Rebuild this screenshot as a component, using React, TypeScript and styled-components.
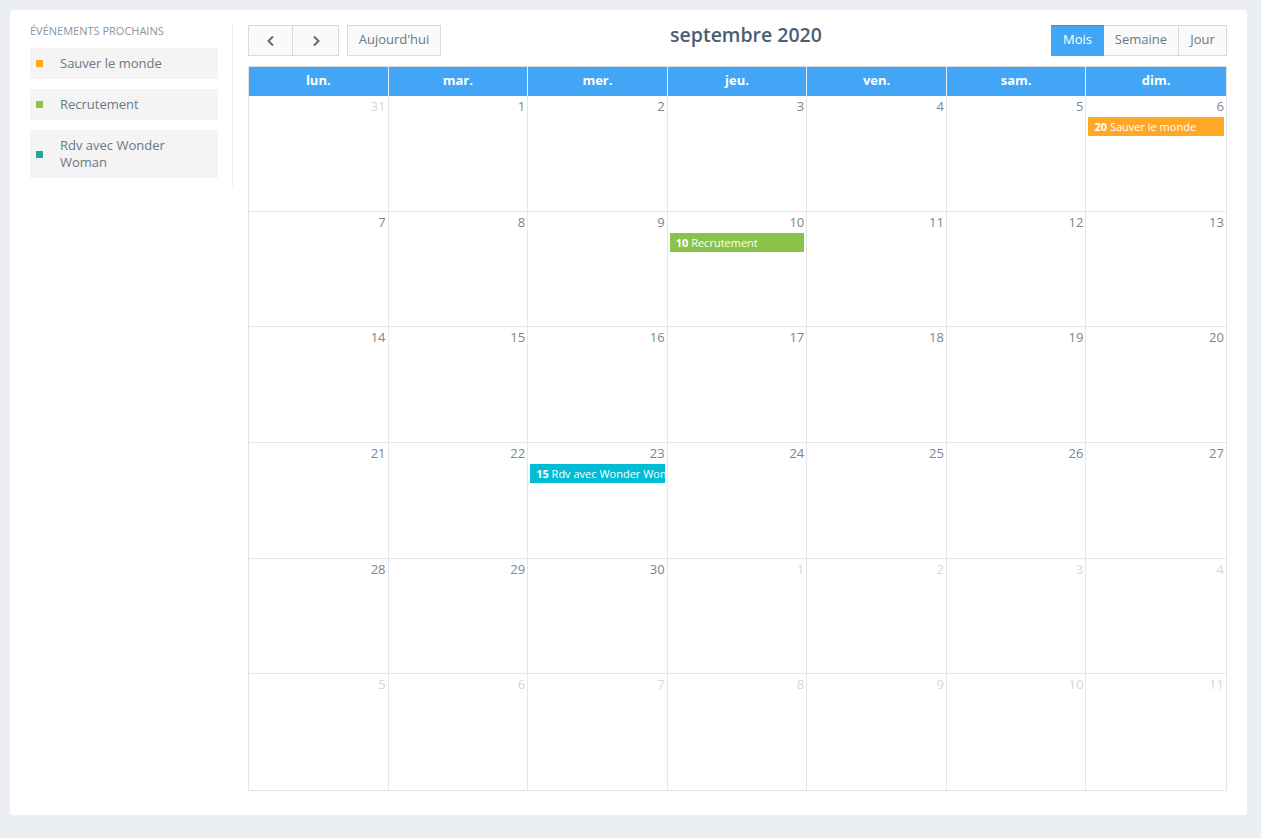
import React from "react";
import styled, { createGlobalStyle } from "styled-components";

const GlobalStyle = createGlobalStyle`
  html, body { margin: 0; padding: 0; background: #ebeef2; }
  body { font-family: "Open Sans", "Noto Sans", sans-serif; color: #6b7785; }
  * { box-sizing: border-box; }
`;

const Card = styled.div`
  margin: 10px;
  width: 1237px;
  height: 805px;
  background: #fff;
  border-radius: 3px;
  padding: 15px 20px 25px 20px;
  display: flex;
  align-items: flex-start;
  gap: 15px;
`;

const Sidebar = styled.aside`
  width: 203px;
  padding: 0 14px 8px 0;
  border-right: 1px solid #ececec;
  display: flex;
  flex-direction: column;
  gap: 10px;
`;

const SideTitle = styled.div`
  font-size: 11px;
  line-height: 11px;
  height: 13px;
  color: #8996a3;
  text-transform: uppercase;
`;

const SideItem = styled.div`
  display: flex;
  align-items: center;
  gap: 17px;
  background: #f4f4f4;
  padding: 7px 30px 7px 6px;
  font-size: 13px;
  line-height: 17px;
  color: #6b7785;
`;

const Swatch = styled.span<{ $c: string }>`
  flex: none;
  width: 7px;
  height: 7px;
  background: ${(p) => p.$c};
`;

const Main = styled.main`
  flex: 1;
  display: flex;
  flex-direction: column;
  gap: 10px;
`;

const Toolbar = styled.div`
  display: flex;
  align-items: center;
  justify-content: space-between;
  height: 31px;
`;

const Group = styled.div`
  display: flex;
  align-items: center;
  gap: 9px;
`;

const BtnGroup = styled.div`
  display: flex;
`;

const Btn = styled.button<{ $w: number; $active?: boolean }>`
  width: ${(p) => p.$w}px;
  height: 31px;
  margin-left: -1px;
  &:first-child { margin-left: 0; }
  display: flex;
  align-items: center;
  justify-content: center;
  font-family: inherit;
  font-size: 13px;
  line-height: 16px;
  padding: 0 0 3px 0;
  cursor: pointer;
  color: ${(p) => (p.$active ? "#fff" : "#6b7785")};
  background: ${(p) => (p.$active ? "#42a5f5" : "#fafafa")};
  border: 1px solid ${(p) => (p.$active ? "#42a5f5" : "#d5dbe1")};
  border-top-color: ${(p) => (p.$active ? "#3a8ed3" : "#d5dbe1")};
  position: relative;
  z-index: ${(p) => (p.$active ? 1 : 0)};
`;

const NavBtn = styled(Btn)`
  padding: 0;
`;

const Title = styled.h2`
  margin: 0;
  font-size: 19.5px;
  font-weight: 600;
  color: #4d5e73;
  line-height: 24px;
  transform: translateY(-6px);
`;

const Calendar = styled.div`
  border: 1px solid #e3e3e3;
  border-top-color: #dedede;
`;

const HeadRow = styled.div`
  display: grid;
  grid-template-columns: repeat(7, 1fr);
  background: #42a5f5;
  height: 29px;
`;

const HeadCell = styled.div`
  display: flex;
  align-items: center;
  justify-content: center;
  padding-bottom: 3px;
  color: #fff;
  font-weight: 700;
  font-size: 13px;
  border-right: 1px solid #e3eef8;
  &:last-child { border-right: none; }
`;

const Grid = styled.div`
  display: grid;
  grid-template-columns: repeat(7, 1fr);
  grid-template-rows: repeat(6, 1fr);
  height: 694px;
`;

const Cell = styled.div<{ $lastCol: boolean; $lastRow: boolean }>`
  border-right: ${(p) => (p.$lastCol ? "none" : "1px solid #e6e6e6")};
  border-bottom: ${(p) => (p.$lastRow ? "none" : "1px solid #e6e6e6")};
  display: flex;
  flex-direction: column;
  min-width: 0;
  overflow: hidden;
`;

const DayNum = styled.div<{ $muted: boolean }>`
  text-align: right;
  padding: 1px 2px 0 0;
  font-size: 13px;
  line-height: 18px;
  color: ${(p) => (p.$muted ? "#d3d7db" : "#7a8591")};
`;

const Event = styled.div<{ $c: string }>`
  margin: 2px 2px 0 2px;
  height: 19px;
  line-height: 19px;
  background: ${(p) => p.$c};
  color: #fff;
  font-size: 11px;
  padding-left: 6px;
  white-space: nowrap;
  overflow: hidden;
  b { font-weight: 700; }
`;

const Chevron = ({ dir }: { dir: "l" | "r" }) => (
  <svg width="10" height="12" viewBox="0 0 10 12">
    <path
      d={dir === "l" ? "M7 1.5 L2.5 6 L7 10.5" : "M3 1.5 L7.5 6 L3 10.5"}
      fill="none"
      stroke="#5d6b7a"
      strokeWidth="2"
    />
  </svg>
);

const days = ["lun.", "mar.", "mer.", "jeu.", "ven.", "sam.", "dim."];

type Ev = { time: string; label: string; color: string };
const events: Record<string, Ev> = {
  "9-6": { time: "20", label: "Sauver le monde", color: "#ffa726" },
  "9-10": { time: "10", label: "Recrutement", color: "#8bc34a" },
  "9-23": { time: "15", label: "Rdv avec Wonder Woman", color: "#00bcd4" },
};

const cells: { d: number; m: number }[] = [];
cells.push({ d: 31, m: 8 });
for (let i = 1; i <= 30; i++) cells.push({ d: i, m: 9 });
for (let i = 1; cells.length < 42; i++) cells.push({ d: i, m: 10 });

const upcoming = [
  { label: "Sauver le monde", color: "#ffa726" },
  { label: "Recrutement", color: "#8bc34a" },
  { label: "Rdv avec Wonder Woman", color: "#26a69a" },
];

export default function App() {
  return (
    <>
      <GlobalStyle />
      <Card>
        <Sidebar>
          <SideTitle>Événements prochains</SideTitle>
          {upcoming.map((u) => (
            <SideItem key={u.label}>
              <Swatch $c={u.color} />
              <span>{u.label}</span>
            </SideItem>
          ))}
        </Sidebar>
        <Main>
          <Toolbar>
            <Group>
              <BtnGroup>
                <NavBtn $w={45} aria-label="prev">
                  <Chevron dir="l" />
                </NavBtn>
                <NavBtn $w={47} aria-label="next">
                  <Chevron dir="r" />
                </NavBtn>
              </BtnGroup>
              <Btn $w={94}>Aujourd'hui</Btn>
            </Group>
            <Title>septembre 2020</Title>
            <BtnGroup>
              <Btn $w={53} $active>
                Mois
              </Btn>
              <Btn $w={76}>Semaine</Btn>
              <Btn $w={49}>Jour</Btn>
            </BtnGroup>
          </Toolbar>
          <Calendar>
            <HeadRow>
              {days.map((d) => (
                <HeadCell key={d}>{d}</HeadCell>
              ))}
            </HeadRow>
            <Grid>
              {cells.map((c, i) => {
                const ev = events[`${c.m}-${c.d}`];
                return (
                  <Cell key={i} $lastCol={i % 7 === 6} $lastRow={i >= 35}>
                    <DayNum $muted={c.m !== 9}>{c.d}</DayNum>
                    {ev && (
                      <Event $c={ev.color}>
                        <b>{ev.time}</b> {ev.label}
                      </Event>
                    )}
                  </Cell>
                );
              })}
            </Grid>
          </Calendar>
        </Main>
      </Card>
    </>
  );
}
